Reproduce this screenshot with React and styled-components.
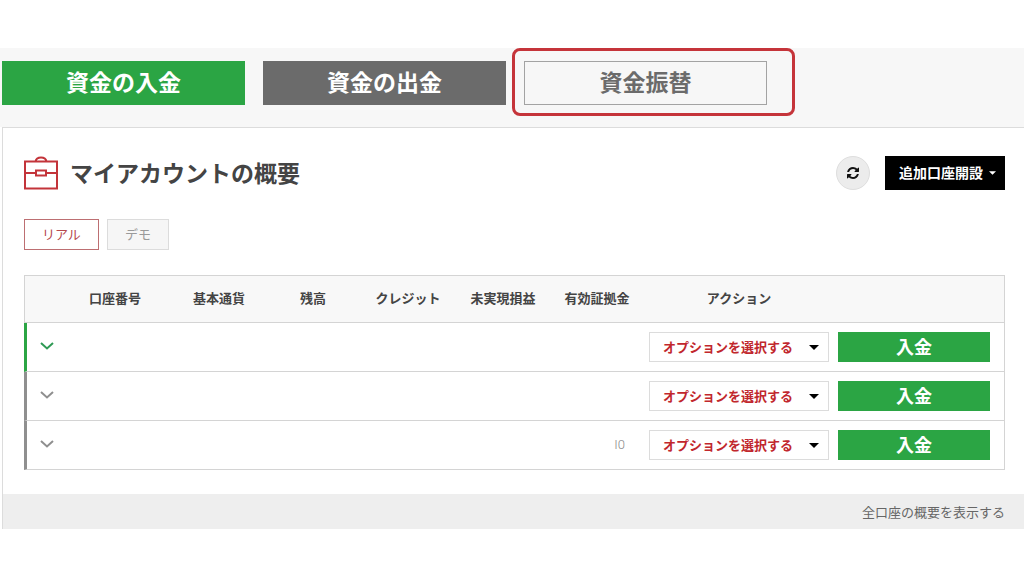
import React from "react";
import styled, { createGlobalStyle } from "styled-components";

const GlobalStyle = createGlobalStyle`
  *, *::before, *::after { box-sizing: border-box; }
  body {
    margin: 0;
    background: #fff;
    color: #444;
    font-family: "Noto Sans CJK JP", "Noto Sans", sans-serif;
    font-size: 13px;
  }
  button, select { font-family: inherit; }
`;

const Page = styled.main`
  padding: 48px 0;
`;

const TransferBar = styled.nav`
  display: flex;
  gap: 18px;
  padding: 13px 2px 22px;
  background: #f7f7f7;
`;

const tones = {
  green: { bg: "#2ba544", fg: "#fff", line: "#2ba544" },
  grey: { bg: "#6b6b6b", fg: "#fff", line: "#6b6b6b" },
  outline: { bg: "#f7f7f7", fg: "#6b6b6b", line: "#a3a3a3" },
};

const TransferButton = styled.button`
  flex: 0 1 243px;
  width: 243px;
  height: 44px;
  padding: 0 0 4px;
  border: 1px solid ${({ $tone }) => tones[$tone].line};
  background: ${({ $tone }) => tones[$tone].bg};
  color: ${({ $tone }) => tones[$tone].fg};
  font-size: 23px;
  font-weight: 700;
  line-height: 36px;
  cursor: pointer;
`;

const Highlight = styled.div`
  position: relative;
  display: flex;
  flex: 0 1 243px;

  &::after {
    content: "";
    position: absolute;
    inset: -13px -28px -11px -12px;
    border: 3px solid #c5343a;
    border-radius: 8px;
    pointer-events: none;
  }
`;

const Card = styled.section`
  margin-left: 2px;
  border: solid #dcdcdc;
  border-width: 1px 0 0 1px;
  background: #fff;
`;

const CardBody = styled.div`
  padding: 28px 19px 24px 21px;
`;

const CardHeader = styled.header`
  display: flex;
  align-items: center;
  height: 34px;
`;

const Title = styled.h1`
  flex: 1;
  margin: 0 0 0 12px;
  padding-bottom: 2px;
  font-size: 23px;
  font-weight: 700;
  line-height: 32px;
`;

const RefreshButton = styled.button`
  display: grid;
  place-items: center;
  width: 34px;
  height: 34px;
  margin-right: 15px;
  padding: 0;
  border: 1px solid #dedede;
  border-radius: 50%;
  background: #ececec;
  color: #111;
  cursor: pointer;
`;

const OpenAccountButton = styled.button`
  display: flex;
  align-items: center;
  gap: 6px;
  height: 34px;
  padding: 0 9px 0 14px;
  border: 0;
  background: #000;
  color: #fff;
  font-size: 14px;
  font-weight: 700;
  cursor: pointer;
`;

const ButtonLabel = styled.span`
  padding-bottom: 2px;
  line-height: 32px;
`;

const Tabs = styled.div`
  display: flex;
  gap: 8px;
  margin: 29px 0 25px;
`;

const Tab = styled.button`
  height: 31px;
  padding: 0 17px 2px;
  border: 1px solid ${({ $active }) => ($active ? "#bd6f72" : "#dcdcdc")};
  background: ${({ $active }) => ($active ? "#fff" : "#f6f6f6")};
  color: ${({ $active }) => ($active ? "#b5494d" : "#9a9a9a")};
  font-size: 13px;
  line-height: 26px;
  cursor: pointer;
`;

const AccountTable = styled.table`
  width: 100%;
  table-layout: fixed;
  border-collapse: separate;
  border-spacing: 0;
`;

const HeadCell = styled.th`
  height: 48px;
  padding: 0 0 4px;
  border: solid #d4d4d4;
  border-width: 1px 0;
  background: #f8f8f8;
  font-size: 13px;
  font-weight: 700;
  text-align: center;

  &:first-child { border-left-width: 1px; }
  &:last-child { border-right-width: 1px; }
`;

const Cell = styled.td`
  height: 49px;
  padding: 0;
  border: solid #d4d4d4;
  border-width: 0 0 1px;

  &:last-child {
    border-right-width: 1px;
    padding: 0 14px 0 8px;
  }
`;

const ExpandCell = styled(Cell)`
  border-left: 3px solid ${({ $active }) => ($active ? "#2ba544" : "#8f8f8f")};
`;

const ExpandButton = styled.button`
  display: grid;
  place-items: center;
  width: 20px;
  height: 22px;
  margin-left: 10px;
  padding: 0 0 2px;
  border: 0;
  background: none;
  color: ${({ $active }) => ($active ? "#2f9a55" : "#8f8f8f")};
  cursor: pointer;
`;

const Amount = styled.span`
  display: block;
  padding: 0 23px 2px 0;
  color: #8a8a8a;
  font-family: Roboto, sans-serif;
  font-size: 13px;
  font-weight: 300;
  text-align: right;
`;

const SelectBox = styled.div`
  display: grid;
  align-items: center;
  margin: 0 1px;

  > * { grid-area: 1 / 1; }
  > svg {
    justify-self: end;
    margin-right: 10px;
    color: #000;
    pointer-events: none;
  }
`;

const Select = styled.select`
  appearance: none;
  width: 100%;
  height: 30px;
  padding: 0 24px 2px 13px;
  border: 1px solid #dcdcdc;
  border-radius: 0;
  background: #fff;
  color: #c1272d;
  font-size: 13px;
  font-weight: 700;
`;

const DepositButton = styled.button`
  display: block;
  width: 100%;
  height: 30px;
  padding: 0 0 2px;
  border: 0;
  background: #2ba544;
  color: #fff;
  font-size: 18px;
  font-weight: 700;
  line-height: 28px;
  cursor: pointer;
`;

const CardFooter = styled.footer`
  display: flex;
  justify-content: flex-end;
  padding: 0 19px;
  background: #eee;
`;

const FooterLink = styled.a`
  color: #666;
  font-size: 13px;
  line-height: 35px;
  text-decoration: none;
`;

const BriefcaseIcon = () => (
  <svg width="34" height="34" viewBox="0 0 34 34" fill="none" stroke="#c3343a" strokeWidth="2" aria-hidden="true">
    <path d="M1 5.5h32v27H1zM11.5 5.500c1-5.500 10-5.500 11 0M1 17h11M22 17h11M12 14.500h10v5H12z" />
  </svg>
);

const RefreshIcon = () => (
  <svg width="12" height="12" viewBox="0 0 1536 1536" fill="currentColor" aria-hidden="true">
    <path d="M1511 928q0 5-1 7-64 268-268 434.500T764 1536q-146 0-282.500-55T238 1324l-129 129q-19 19-45 19t-45-19-19-45V960q0-26 19-45t45-19h448q26 0 45 19t19 45-19 45l-137 137q71 66 161 102t187 36q134 0 250-65t186-179q11-17 53-117 8-23 30-23h192q13 0 22.500 9.500t9.500 22.500zm25-800v448q0 26-19 45t-45 19h-448q-26 0-45-19t-19-45 19-45l138-138Q969 256 768 256q-134 0-250 65T332 500q-11 17-53 117-8 23-30 23H50q-13 0-22.500-9.500T18 608v-7q65-268 270-434.500T768 0q146 0 284 55.500T1297 212l130-129q19-19 45-19t45 19 19 45z" />
  </svg>
);

const Caret = ({ width = 10, height = 5 }) => (
  <svg width={width} height={height} viewBox="0 0 10 5" fill="currentColor" aria-hidden="true">
    <path d="M0 0h10L5 5z" />
  </svg>
);

const Chevron = () => (
  <svg width="14" height="8" viewBox="0 0 14 8" fill="none" stroke="currentColor" strokeWidth="2" aria-hidden="true">
    <path d="M1 1l6 5.500L13 1" />
  </svg>
);

const columns = [
  { label: "", width: 38 },
  { label: "口座番号", width: 106 },
  { label: "基本通貨", width: 102 },
  { label: "残高", width: 86 },
  { label: "クレジット", width: 104 },
  { label: "未実現損益", width: 86 },
  { label: "有効証拠金", width: 102 },
  { label: "アクション", width: 182 },
  { label: "", width: 175 },
];

const accounts = [
  { id: 1, active: true, margin: "" },
  { id: 2, active: false, margin: "" },
  { id: 3, active: false, margin: "I0" },
];

const AccountRow = ({ account }) => (
  <tr>
    <ExpandCell $active={account.active}>
      <ExpandButton type="button" $active={account.active} aria-label="詳細">
        <Chevron />
      </ExpandButton>
    </ExpandCell>
    <Cell />
    <Cell />
    <Cell />
    <Cell />
    <Cell />
    <Cell>{account.margin && <Amount>{account.margin}</Amount>}</Cell>
    <Cell>
      <SelectBox>
        <Select aria-label="アクション">
          <option>オプションを選択する</option>
        </Select>
        <Caret />
      </SelectBox>
    </Cell>
    <Cell>
      <DepositButton type="button">入金</DepositButton>
    </Cell>
  </tr>
);

export default function App() {
  return (
    <>
      <GlobalStyle />
      <Page>
        <TransferBar>
          <TransferButton type="button" $tone="green">資金の入金</TransferButton>
          <TransferButton type="button" $tone="grey">資金の出金</TransferButton>
          <Highlight>
            <TransferButton type="button" $tone="outline">資金振替</TransferButton>
          </Highlight>
        </TransferBar>
        <Card>
          <CardBody>
            <CardHeader>
              <BriefcaseIcon />
              <Title>マイアカウントの概要</Title>
              <RefreshButton type="button" aria-label="更新">
                <RefreshIcon />
              </RefreshButton>
              <OpenAccountButton type="button">
                <ButtonLabel>追加口座開設</ButtonLabel>
                <Caret width={7} height={4} />
              </OpenAccountButton>
            </CardHeader>
            <Tabs>
              <Tab type="button" $active>リアル</Tab>
              <Tab type="button">デモ</Tab>
            </Tabs>
            <AccountTable>
              <colgroup>
                {columns.map((column, index) => (
                  <col key={index} width={column.width} />
                ))}
              </colgroup>
              <thead>
                <tr>
                  {columns.map((column, index) => (
                    <HeadCell key={index} scope="col">{column.label}</HeadCell>
                  ))}
                </tr>
              </thead>
              <tbody>
                {accounts.map((account) => (
                  <AccountRow key={account.id} account={account} />
                ))}
              </tbody>
            </AccountTable>
          </CardBody>
          <CardFooter>
            <FooterLink href="#all">全口座の概要を表示する</FooterLink>
          </CardFooter>
        </Card>
      </Page>
    </>
  );
}
